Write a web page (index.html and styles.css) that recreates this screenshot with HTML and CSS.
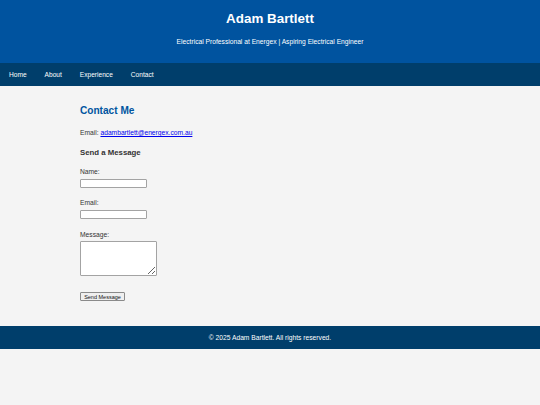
FILE: index.html
```html
<!DOCTYPE html>
<html lang="en">
<head>
<meta charset="utf-8">
<title>Adam Bartlett</title>
<link rel="stylesheet" href="styles.css">
</head>
<body>
<header class="site-header">
  <h1 class="site-title">Adam Bartlett</h1>
  <p class="tagline">Electrical Professional at Energex | Aspiring Electrical Engineer</p>
</header>
<nav class="site-nav">
  <a href="#home">Home</a>
  <a href="#about">About</a>
  <a href="#experience">Experience</a>
  <a href="#contact">Contact</a>
</nav>
<main class="content">
  <section class="contact" id="contact">
    <h2 class="section-title">Contact Me</h2>
    <p class="email-line">Email: <a href="mailto:adambartlett@energex.com.au">adambartlett@energex.com.au</a></p>
    <h3 class="form-title">Send a Message</h3>
    <form class="contact-form">
      <div class="field">
        <label class="field-label" for="name">Name:</label>
        <input class="field-input" type="text" id="name">
      </div>
      <div class="field">
        <label class="field-label" for="email">Email:</label>
        <input class="field-input" type="email" id="email">
      </div>
      <div class="field">
        <label class="field-label" for="message">Message:</label>
        <textarea class="field-textarea" id="message"></textarea>
      </div>
      <button class="send-btn" type="button">Send Message</button>
    </form>
  </section>
</main>
<footer class="site-footer">
  <p class="footer-text">&copy; 2025 Adam Bartlett. All rights reserved.</p>
</footer>
</body>
</html>
```
FILE: styles.css
```css
html, body {
  margin: 0;
  padding: 0;
}
body {
  background: #f4f4f4;
  color: #333;
  font-family: "Liberation Sans", Arial, sans-serif;
  font-size: 6.7px;
  line-height: 8px;
}
.site-header {
  background: #00539f;
  color: #fff;
  text-align: center;
  padding: 11.3px 0 16.5px;
}
.site-title {
  margin: 0;
  font-size: 13.4px;
  line-height: 16px;
  font-weight: bold;
}
.tagline {
  margin: 11px 0 0;
  font-size: 6.7px;
  line-height: 8px;
}
.site-nav {
  background: #003e6b;
  height: 23px;
  display: flex;
  align-items: center;
}
.site-nav a {
  color: #fff;
  text-decoration: none;
  padding: 0 9px;
  line-height: 23px;
  font-size: 6.6px;
}
.content {
  width: 380px;
  margin: 0 auto;
  padding: 19px 0 25.5px;
}
.section-title {
  margin: 0;
  font-size: 10.1px;
  line-height: 12px;
  color: #0055a0;
}
.email-line {
  margin: 12.3px 0 0;
}
.email-line a {
  color: #0000ee;
}
.form-title {
  margin: 11px 0 0;
  font-size: 7.8px;
  line-height: 9px;
  color: #333;
}
.contact-form {
  margin-top: 11px;
  display: flex;
  flex-direction: column;
  align-items: flex-start;
}
.field {
  display: flex;
  flex-direction: column;
  align-items: flex-start;
  margin-bottom: 11.8px;
}
.field-label {
  display: block;
  margin-bottom: 2.6px;
}
.field-input {
  box-sizing: border-box;
  width: 67px;
  height: 9px;
  margin: 0;
  padding: 0 2px;
  border: 1px solid #a3a3a3;
  border-radius: 1px;
  background: #fff;
  font-size: 5.6px;
}
.field-textarea {
  box-sizing: border-box;
  width: 77px;
  height: 35px;
  margin: 0;
  padding: 1px;
  border: 1px solid #a3a3a3;
  border-radius: 1px;
  background: #fff;
  font-size: 5.6px;
}
.send-btn {
  margin-top: 4.2px;
  box-sizing: border-box;
  width: 45px;
  height: 8.5px;
  padding: 0;
  border: 1px solid #8a8a8a;
  border-radius: 1px;
  background: #efefef;
  color: #111;
  font-family: "Liberation Sans", Arial, sans-serif;
  font-size: 5.5px;
  line-height: 6px;
}
.site-footer {
  background: #003e6b;
  color: #fff;
  text-align: center;
  height: 23px;
  display: flex;
  align-items: center;
  justify-content: center;
}
.footer-text {
  margin: 0;
  line-height: 23px;
  font-size: 6.7px;
}
```
